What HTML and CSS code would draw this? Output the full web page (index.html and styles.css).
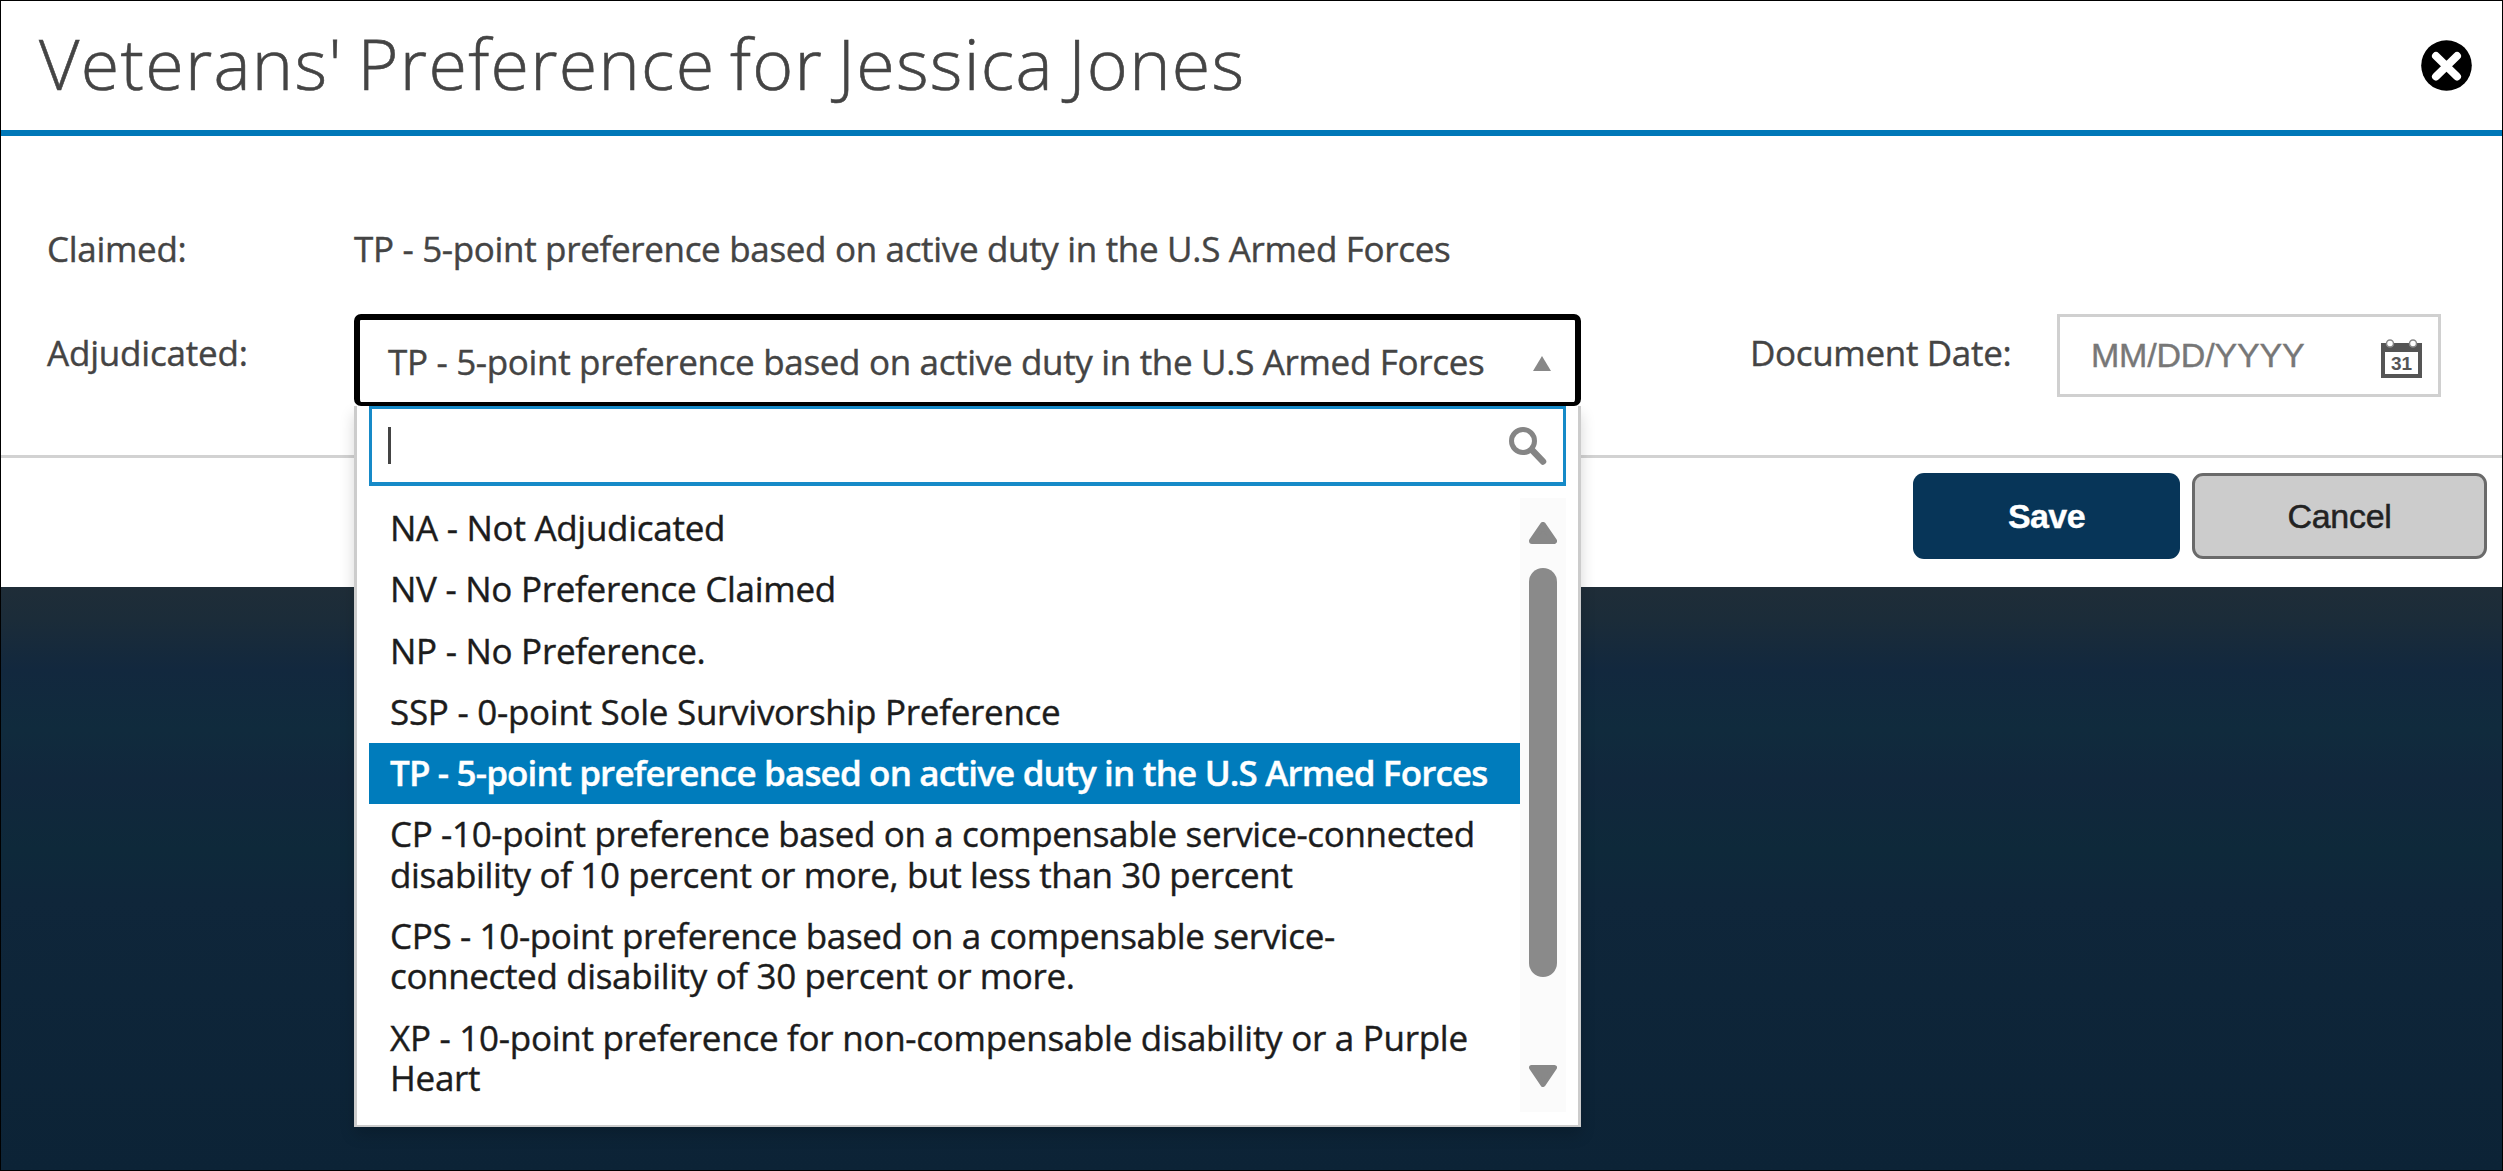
FILE: index.html
```html
<!DOCTYPE html>
<html lang="en">
<head>
<meta charset="utf-8">
<title>Veterans' Preference</title>
<link rel="stylesheet" href="styles.css">
</head>
<body>
<main class="dialog">
  <header class="header">
    <h1 class="title">Veterans' Preference for Jessica Jones</h1>
    <button class="close" aria-label="Close">
      <svg viewBox="0 0 51 51" width="51" height="51">
        <circle cx="25.5" cy="25.5" r="25.3"/>
        <path d="M15 16 36 36.500M36 16 15 36.500" stroke="#fff" stroke-width="8" stroke-linecap="round"/>
      </svg>
    </button>
  </header>
  <section class="form">
    <div class="row">
      <span class="label claimed">Claimed:</span>
      <span class="value">TP - 5-point preference based on active duty in the U.S Armed Forces</span>
    </div>
    <div class="row fields">
      <span class="label adjudicated">Adjudicated:</span>
      <div class="select">
        <div class="selection">
          <span>TP - 5-point preference based on active duty in the U.S Armed Forces</span>
          <svg class="arrow" viewBox="0 0 18 15" width="18" height="15"><path d="M9 0 18 15H0Z" fill="#888"/></svg>
        </div>
        <div class="dropdown">
          <div class="search">
            <span class="caret"></span>
            <svg viewBox="0 0 38 38" width="38" height="38" fill="none" stroke="#858585">
              <circle cx="14" cy="14" r="11.5" stroke-width="5"/>
              <path d="M23 23 34 34.500" stroke-width="6.500" stroke-linecap="round"/>
            </svg>
          </div>
          <div class="results">
            <ul class="options">
              <li>NA - Not Adjudicated</li>
              <li>NV - No Preference Claimed</li>
              <li>NP - No Preference.</li>
              <li>SSP - 0-point Sole Survivorship Preference</li>
              <li class="active">TP - 5-point preference based on active duty in the U.S Armed Forces</li>
              <li class="tight">CP -10-point preference based on a compensable service-connected<br>disability of 10 percent or more, but less than 30 percent</li>
              <li class="tight">CPS - 10-point preference based on a compensable service-<br>connected disability of 30 percent or more.</li>
              <li>XP - 10-point preference for non-compensable disability or a Purple<br>Heart</li>
            </ul>
            <div class="scrollbar">
              <svg viewBox="0 0 28 22" width="28" height="22"><path d="M14 3 25 19H3Z" fill="#888" stroke="#888" stroke-width="6" stroke-linejoin="round"/></svg>
              <div class="thumb"></div>
              <svg class="down" viewBox="0 0 28 22" width="28" height="22"><path d="M14 19.500 25.500 2.500H2.500Z" fill="#888" stroke="#888" stroke-width="5" stroke-linejoin="round"/></svg>
            </div>
          </div>
        </div>
      </div>
      <span class="label date-label">Document Date:</span>
      <div class="date">
        <span>MM/DD/YYYY</span>
        <svg viewBox="0 0 41 39" width="41" height="39">
          <path d="M0 4h41v35H0Z" fill="#555"/>
          <path d="M4 13h33v22H4Z" fill="#fff"/>
          <circle cx="9" cy="4.500" r="3.500" fill="#fff" stroke="#888" stroke-width="1.500"/>
          <circle cx="32" cy="4.500" r="3.500" fill="#fff" stroke="#888" stroke-width="1.500"/>
          <text x="20.500" y="31" text-anchor="middle" class="day">31</text>
        </svg>
      </div>
    </div>
  </section>
  <footer class="footer">
    <button class="btn save">Save</button>
    <button class="btn cancel">Cancel</button>
  </footer>
</main>
</body>
</html>
```
FILE: styles.css
```css
* { box-sizing: border-box; }

body {
  margin: 0;
  height: 1171px;
  overflow: hidden;
  border: 1px solid #000;
  background: linear-gradient(#1f2d38 586px, #1b2c39 620px, #12283e 670px, #102b3d 730px, #11273c 780px, #0e293a 850px, #0f263a 900px, #0c2336 1171px);
  color: #444;
  font: 35px/40px "Open Sans", sans-serif;
  letter-spacing: -0.33px;
  -webkit-text-stroke: 0.4px;
}

.dialog { background: #fff; height: 586px; }

.header {
  display: flex;
  justify-content: space-between;
  align-items: center;
  height: 135px;
  padding: 0 30px 0 38px;
  border-bottom: 6px solid #0078b8;
}

.title {
  margin: 0 0 5px;
  font-size: 70px;
  line-height: 90px;
  font-weight: 300;
  letter-spacing: 1.3px;
  word-spacing: -5px;
  -webkit-text-stroke: 0.6px;
}

.close { border: 0; padding: 0; background: none; line-height: 0; }

.form {
  height: 322px;
  padding-top: 93px;
  border-bottom: 3px solid #d2d2d2;
}

.row { display: flex; align-items: flex-start; white-space: nowrap; padding-left: 46px; }
.label { flex: none; }
.claimed { width: 307px; letter-spacing: -0.3px; }
.adjudicated { width: 307px; letter-spacing: -0.2px; }
.fields { margin-top: 45px; }
.fields .label { margin-top: 19px; }
.date-label { margin-left: 169px; width: 307px; }

.select { position: relative; flex: none; width: 1227px; }

.selection {
  display: flex;
  justify-content: space-between;
  align-items: center;
  height: 92px;
  padding: 2px 24px 0 28px;
  border: 6px solid #000;
  border-bottom-width: 4px;
  border-radius: 7px;
}

.arrow { margin-top: 2px; }

.dropdown {
  position: absolute;
  top: 92px;
  left: 0;
  width: 1227px;
  height: 721px;
  padding: 0 12px;
  background: #fff;
  border: solid #ccc;
  border-width: 0 3px 2px;
  box-shadow: 0 8px 14px rgba(0, 0, 0, .16);
  color: #1c1c1c;
}

.search {
  display: flex;
  justify-content: space-between;
  height: 80px;
  padding: 18px 16px 0;
  border: 3px solid #168ac8;
  border-bottom-width: 4px;
}

.caret { width: 3px; height: 37px; background: #444; }

.results { display: flex; margin-top: 12px; height: 614px; }

.options { width: 1151px; margin: 0; padding: 0; list-style: none; }
.options li { padding: 10px 0 11px 21px; line-height: 40.3px; letter-spacing: -0.28px; }
.options .tight { letter-spacing: -0.36px; }
.options .active {
  background: #007cbc;
  color: #fff;
  font-weight: 600;
  letter-spacing: -0.84px;
}

.scrollbar {
  display: flex;
  flex-direction: column;
  align-items: center;
  width: 46px;
  padding: 24px 0 25px;
  background: #fbfbfb;
}

.thumb { width: 28px; height: 409px; margin-top: 24px; border-radius: 14px; background: #8a8a8a; }
.down { margin-top: auto; }

.date {
  display: flex;
  justify-content: space-between;
  align-items: center;
  width: 384px;
  height: 83px;
  padding: 0 16px 2px 31px;
  border: 3px solid #d0d0d0;
  color: #777;
  font: 34px/40px "Liberation Sans", sans-serif;
  letter-spacing: -0.2px;
}

.date svg { margin-top: 7px; }
.day { font: bold 19px "Liberation Sans", sans-serif; fill: #555; letter-spacing: 0; }

.footer { display: flex; justify-content: flex-end; gap: 12px; padding: 15px 15px 0 0; }

.btn {
  height: 86px;
  border: 0;
  padding: 0;
  border-radius: 11px;
  font: 34px/40px "Liberation Sans", sans-serif;
}

.save { width: 267px; background: #073558; color: #fff; font-weight: bold; letter-spacing: -0.6px; }
.cancel { width: 295px; background: #ccc; color: #222; border: 3px solid #6a6a6a; letter-spacing: -0.3px; -webkit-text-stroke: 0.5px #222; }
```
